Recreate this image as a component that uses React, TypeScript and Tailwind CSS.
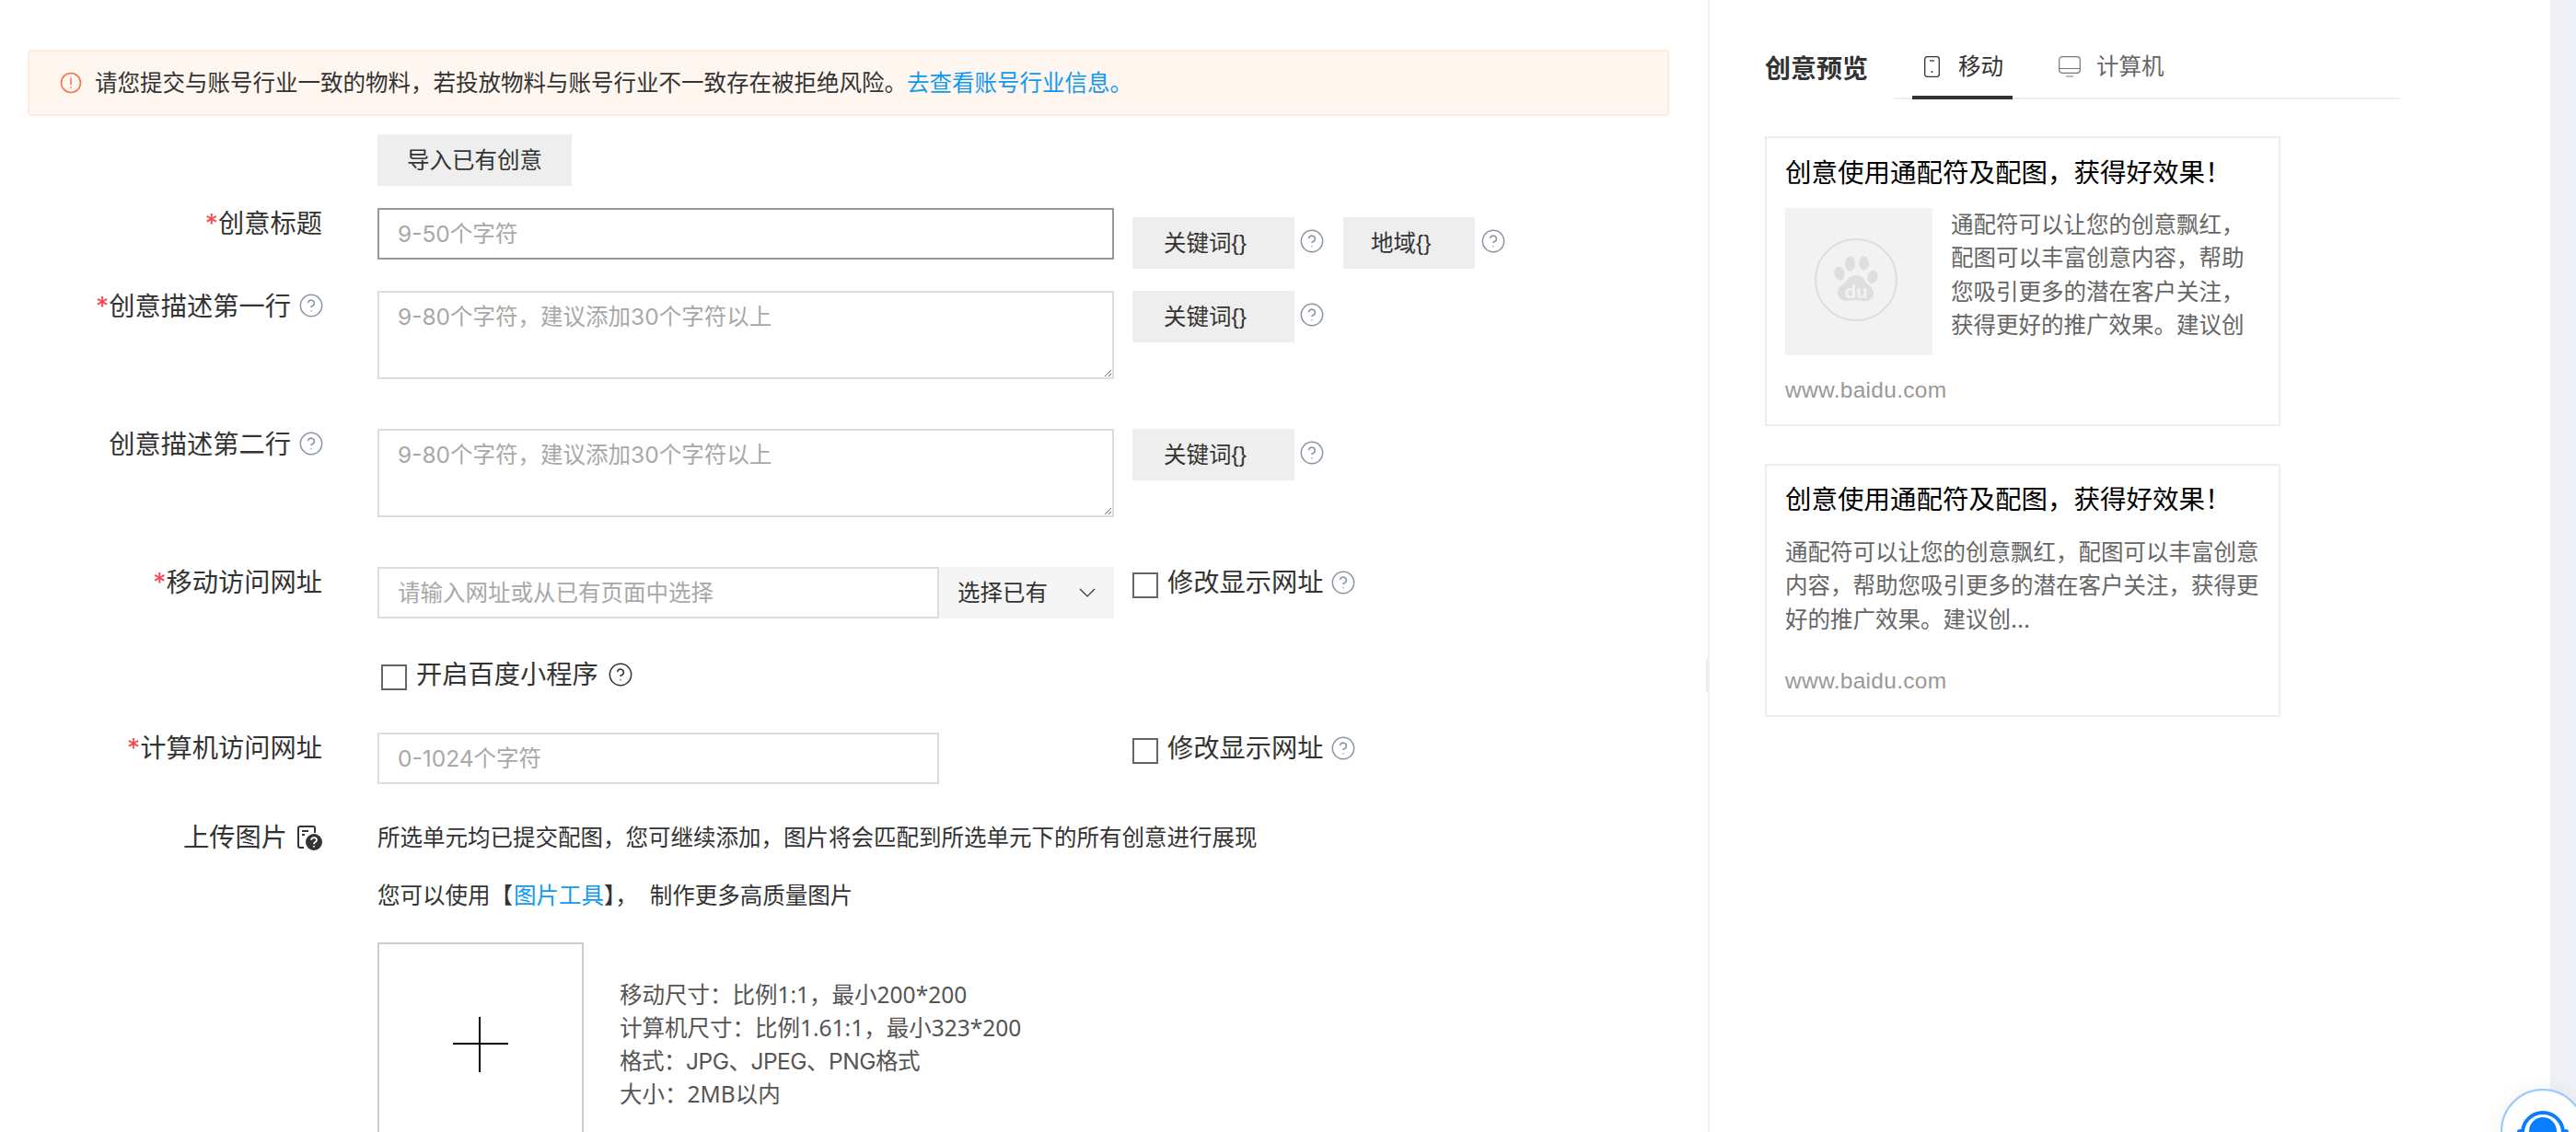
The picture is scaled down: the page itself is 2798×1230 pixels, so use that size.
import { CircleHelp } from "lucide-react";

function Help({ dark = false }: { dark?: boolean }) {
  return (
    <CircleHelp
      strokeWidth={1.3}
      className={dark ? "w-[28px] h-[28px] shrink-0 text-[#333333]" : "w-[28px] h-[28px] shrink-0 text-[#8a93a6]"}
    />
  );
}

function Label({ text, required = false, help = false }: { text: string; required?: boolean; help?: boolean }) {
  return (
    <div className="w-[350px] shrink-0 flex justify-end items-center gap-[8px] h-[34px] text-[28.25px] text-[#333333] whitespace-nowrap">
      <span>
        {required && <span className="text-[#f5484d]">*</span>}
        {text}
      </span>
      {help && <span className="-mr-[2px] -mt-[2px]"><Help /></span>}
    </div>
  );
}

function Braces() {
  return <span className="font-['Liberation_Sans',sans-serif]">{"{}"}</span>;
}

function KeywordButton({ text, width, pad }: { text: string; width: string; pad: string }) {
  return (
    <button type="button" className={`${width} ${pad} h-[56px] shrink-0 bg-[#eeeeee] text-[24.5px] text-[#333333] flex items-center`}>
      {text}
      <Braces />
    </button>
  );
}

function Check({ text, dark = false }: { text: string; dark?: boolean }) {
  return (
    <div className="flex items-start gap-[10px] whitespace-nowrap text-[28.25px] leading-[28px] text-[#333333]">
      <span className="w-[28px] h-[28px] border-2 border-[#666666] bg-white shrink-0" />
      <div className="flex items-center -mt-[3px]">
        <span>{text}</span>
        <span className={dark ? "ml-[10px]" : "ml-[7px]"}><Help dark={dark} /></span>
      </div>
    </div>
  );
}

function TextBox({ placeholder }: { placeholder: string }) {
  return (
    <textarea
      placeholder={placeholder}
      className="block w-[800px] h-[96px] border-2 border-[#dddddd] px-[20px] py-[8px] text-[24.5px] leading-[36px] outline-none placeholder:text-[#a8a8a8]"
    />
  );
}

function PawLogo() {
  return (
    <svg viewBox="4 0 110 110" className="w-[110px] h-[110px]">
      <circle cx="56" cy="53" r="44" fill="none" stroke="#dedede" strokeWidth="2" />
      <g fill="#dedede">
        <ellipse cx="49.5" cy="35.5" rx="5.5" ry="8" />
        <ellipse cx="64.5" cy="35" rx="5.5" ry="7.5" />
        <ellipse cx="38" cy="46" rx="5.5" ry="7.5" transform="rotate(-15 38 46)" />
        <ellipse cx="74" cy="50" rx="5.5" ry="7" transform="rotate(15 74 50)" />
        <path d="M56 48c5 0 8 3 10 7 2 3 9 6 9 13 0 6-5 8-9 8-4 0-7-1-10-1s-6 1-10 1c-5 0-10-3-10-9 0-7 7-9 10-13 2-3 5-6 10-6z" />
      </g>
      <text x="56" y="73" textAnchor="middle" fontSize="20" fontWeight="700" fill="#f2f2f2" fontFamily="Inter, sans-serif">
        du
      </text>
    </svg>
  );
}

function PreviewTitle() {
  return <div className="text-[28.5px] leading-[36px] text-black whitespace-nowrap">创意使用通配符及配图，获得好效果！</div>;
}

function PreviewUrl() {
  return <div className="text-[24.5px] leading-[36px] tracking-[0.3px] text-[#999999] font-['Liberation_Sans',sans-serif]">www.baidu.com</div>;
}

export default function App() {
  return (
    <div className="relative flex w-[2798px] h-[1230px] overflow-hidden bg-white font-['Inter','Noto_Sans_CJK_SC',sans-serif]">
      {/* form */}
      <div className="w-[1857px] shrink-0 border-r-2 border-[#eeeeee] pt-[54px] pl-[30px]">
        <div className="w-[1783px] h-[72px] flex items-center gap-[14px] pl-[33px] bg-[#fff6f0] border-2 border-[#ffeadf] rounded-[4px] text-[24.5px] text-[#333333]">
          <svg viewBox="0 0 24 24" className="w-[24px] h-[24px] shrink-0" fill="none" stroke="#f5764a" strokeWidth="1.6">
            <circle cx="12" cy="12" r="10.5" />
            <path d="M12 6.5v7.5M12 16.5v1.5" />
          </svg>
          <span>
            请您提交与账号行业一致的物料，若投放物料与账号行业不一致存在被拒绝风险。
            <span className="text-[#0f9af0]">去查看账号行业信息。</span>
          </span>
        </div>

        <div className="-ml-[30px]">
          <div className="pl-[410px] mt-[20px]">
            <button type="button" className="w-[211px] h-[56px] bg-[#eeeeee] text-[24.5px] text-[#333333]">
              导入已有创意
            </button>
          </div>

          <div className="flex items-start mt-[24px]">
            <Label text="创意标题" required />
            <input
              placeholder="9-50个字符"
              className="ml-[60px] w-[800px] h-[56px] border-2 border-[#999999] px-[20px] text-[24.5px] outline-none placeholder:text-[#a8a8a8]"
            />
            <div className="ml-[20px] mt-[10px] flex items-center">
              <KeywordButton text="关键词" width="w-[176px]" pad="pl-[34px]" />
              <span className="ml-[5px] mr-[20px] -mt-[4px]"><Help /></span>
              <KeywordButton text="地域" width="w-[143px]" pad="pl-[30px]" />
              <span className="ml-[6px] -mt-[4px]"><Help /></span>
            </div>
          </div>

          <div className="flex items-start mt-[24px]">
            <Label text="创意描述第一行" required help />
            <div className="ml-[60px]"><TextBox placeholder="9-80个字符，建议添加30个字符以上" /></div>
            <div className="ml-[20px] flex items-center">
              <KeywordButton text="关键词" width="w-[176px]" pad="pl-[34px]" />
              <span className="ml-[5px] -mt-[4px]"><Help /></span>
            </div>
          </div>

          <div className="flex items-start mt-[54px]">
            <Label text="创意描述第二行" help />
            <div className="ml-[60px]"><TextBox placeholder="9-80个字符，建议添加30个字符以上" /></div>
            <div className="ml-[20px] flex items-center">
              <KeywordButton text="关键词" width="w-[176px]" pad="pl-[34px]" />
              <span className="ml-[5px] -mt-[4px]"><Help /></span>
            </div>
          </div>

          <div className="flex items-start mt-[54px]">
            <Label text="移动访问网址" required />
            <div className="ml-[60px] flex w-[800px] h-[56px]">
              <input
                placeholder="请输入网址或从已有页面中选择"
                className="w-[610px] h-[56px] border-2 border-[#dddddd] px-[20px] text-[24.5px] outline-none placeholder:text-[#a8a8a8]"
              />
              <div className="flex-1 flex items-center justify-between pl-[20px] pr-[20px] bg-[#f5f5f5] text-[24.5px] text-[#333333]">
                <span>选择已有</span>
                <svg viewBox="0 0 18 10" className="w-[18px] h-[10px]" fill="none" stroke="#333333" strokeWidth="1.2">
                  <path d="M1 1l8 8 8-8" />
                </svg>
              </div>
            </div>
            <div className="ml-[20px] mt-[6px]"><Check text="修改显示网址" /></div>
          </div>

          <div className="pl-[414px] mt-[50px]"><Check text="开启百度小程序" dark /></div>

          <div className="flex items-start mt-[46px]">
            <Label text="计算机访问网址" required />
            <input
              placeholder="0-1024个字符"
              className="ml-[60px] w-[610px] h-[56px] border-2 border-[#dddddd] px-[20px] text-[24.5px] outline-none placeholder:text-[#a8a8a8]"
            />
            <div className="ml-[210px] mt-[6px]"><Check text="修改显示网址" /></div>
          </div>

          <div className="flex items-start mt-[41px]">
            <div className="w-[350px] shrink-0 flex justify-end items-center gap-[10px] h-[34px] text-[28.25px] text-[#333333]">
              <span>上传图片</span>
              <svg viewBox="0 0 28 28" className="w-[28px] h-[28px] shrink-0">
                <path d="M8 25H4a2 2 0 0 1-2-2V4a2 2 0 0 1 2-2h14a2 2 0 0 1 2 2v5" fill="none" stroke="#333333" strokeWidth="2" />
                <path d="M6 7h7M6 11h3" stroke="#333333" strokeWidth="2" />
                <circle cx="19" cy="19" r="9" fill="#333333" />
                <path d="M16.2 16.8c0-3.6 5.8-3.6 5.8 0 0 2.4-3 2.2-3 4.4M19 23v1.6" fill="none" stroke="#ffffff" strokeWidth="1.8" />
              </svg>
            </div>
            <div className="ml-[60px] text-[24.5px] leading-[34px] text-[#333333]">
              <div>所选单元均已提交配图，您可继续添加，图片将会匹配到所选单元下的所有创意进行展现</div>
              <div className="mt-[29px]">
                您可以使用【<span className="ml-[1px] text-[#0f9af0]">图片工具</span>】，<span className="ml-[13px]">制作更多高质量图片</span>
              </div>
              <div className="flex items-center gap-[39px] mt-[34px]">
                <div className="w-[224px] h-[222px] shrink-0 border-2 border-[#cccccc] flex items-center justify-center">
                  <svg viewBox="0 0 60 60" className="w-[60px] h-[60px]" stroke="#000000" strokeWidth="2">
                    <path d="M29 0v60M0 29h60" />
                  </svg>
                </div>
                <div className="text-[24.5px] leading-[36px] text-[#555555] whitespace-nowrap font-['Noto_Sans','Noto_Sans_CJK_SC',sans-serif]">
                  <div>移动尺寸：比例1:1，最小200*200</div>
                  <div>计算机尺寸：比例1.61:1，最小323*200</div>
                  <div className="tracking-[-0.5px] font-['Inter','Noto_Sans_CJK_SC',sans-serif]">格式：JPG、JPEG、PNG格式</div>
                  <div>大小：2MB以内</div>
                </div>
              </div>
            </div>
          </div>
        </div>
      </div>

      {/* preview */}
      <div className="flex-1 pl-[60px]">
        <div className="flex items-start">
          <div className="mt-[58px] w-[112px] text-[28px] leading-[34px] font-semibold text-[#333333] whitespace-nowrap">创意预览</div>
          <div className="ml-[28px] mt-[48px] w-[550px] h-[60px] flex border-b-2 border-[#eeeeee] text-[24.5px]">
            <div className="ml-[20px] w-[109px] h-[60px] pl-[13px] pb-[8px] flex items-center gap-[20px] border-b-4 border-[#333333] text-[#333333]">
              <svg viewBox="0 0 17 23" className="w-[17px] h-[23px]" fill="none" stroke="#333333" strokeWidth="1.3">
                <rect x="0.7" y="0.7" width="15.6" height="21.6" rx="2.5" />
                <path d="M6 5h5" />
                <circle cx="8.5" cy="17" r="1" fill="#333333" stroke="none" />
              </svg>
              <span>移动</span>
            </div>
            <div className="ml-[50px] h-[58px] pb-[10px] flex items-center gap-[17px] text-[#666666]">
              <svg viewBox="0 0 24 23" className="w-[24px] h-[23px]" fill="none" stroke="#777777" strokeWidth="1.2">
                <rect x="0.7" y="0.7" width="22.6" height="17.6" rx="3" />
                <path d="M1 13.5h22M8 22h8" />
              </svg>
              <span>计算机</span>
            </div>
          </div>
        </div>

        <div className="w-[560px] mt-[40px] border-2 border-[#eeeeee] px-[20px] pt-[20px] pb-[19px]">
          <PreviewTitle />
          <div className="flex gap-[20px] mt-[20px]">
            <div className="w-[160px] h-[160px] shrink-0 bg-[#f2f2f2] flex items-center justify-center">
              <PawLogo />
            </div>
            <div className="h-[146px] overflow-hidden text-[24.5px] leading-[36.4px] text-[#666666]">
              通配符可以让您的创意飘红，配图可以丰富创意内容，帮助您吸引更多的潜在客户关注，获得更好的推广效果。建议创
            </div>
          </div>
          <div className="mt-[20px]"><PreviewUrl /></div>
        </div>

        <div className="w-[560px] mt-[41px] border-2 border-[#eeeeee] px-[20px] pt-[19px] pb-[19px]">
          <PreviewTitle />
          <div className="mt-[21px] text-[24.5px] leading-[36.4px] text-[#666666]">
            通配符可以让您的创意飘红，配图可以丰富创意内容，帮助您吸引更多的潜在客户关注，获得更好的推广效果。建议创...
          </div>
          <div className="mt-[31px]"><PreviewUrl /></div>
        </div>
      </div>

      <div className="w-[28px] shrink-0 bg-[#f0f1f6]" />

      {/* divider handle */}
      <div className="absolute left-[1853px] top-[716px] w-[2px] h-[36px] bg-[#eeeeee]" />

      {/* floating help button */}
      <div className="absolute left-[2716px] top-[1183px] w-[92px] h-[92px] rounded-full bg-white border-2 border-[#99c8ff] shadow-[0_0_24px_rgba(0,0,0,0.06)] flex items-center justify-center">
        <svg viewBox="0 0 56 56" className="w-[56px] h-[56px] mt-[4px]">
          <path d="M6 28a22 22 0 0 1 44 0" fill="none" stroke="#0a7cff" strokeWidth="4" />
          <circle cx="28" cy="26" r="15" fill="#0a7cff" />
          <rect x="0" y="24" width="7" height="16" rx="3" fill="#0a7cff" />
          <rect x="49" y="24" width="7" height="16" rx="3" fill="#0a7cff" />
        </svg>
      </div>
    </div>
  );
}
